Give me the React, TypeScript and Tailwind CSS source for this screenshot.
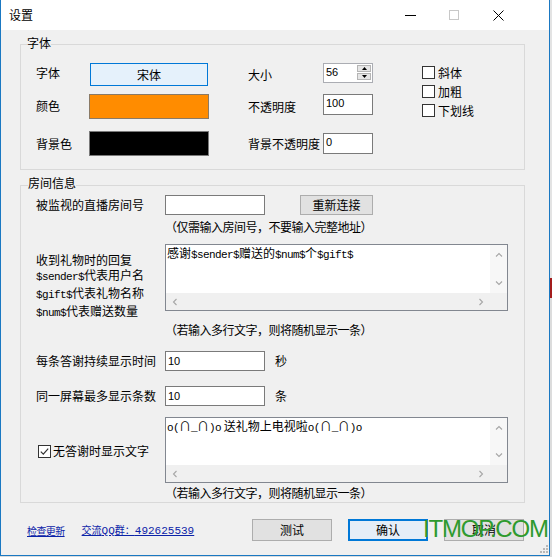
import React from "react";

const F = "font-['Noto_Sans_CJK_SC','Liberation_Sans',sans-serif]";

function M({ children }: { children: React.ReactNode }) {
  return <span className="font-['Liberation_Mono',monospace] text-[11px] tracking-[-0.6px]">{children}</span>;
}

function Chev({ d }: { d: "u" | "d" | "l" | "r" }) {
  const paths: Record<string, string> = {
    u: "M1 5.5 L4 2.5 L7 5.5",
    d: "M1 2.5 L4 5.5 L7 2.5",
    l: "M5.5 1 L2.5 4 L5.5 7",
    r: "M2.5 1 L5.5 4 L2.5 7",
  };
  return (
    <svg width="8" height="8" viewBox="0 0 8 8" className="shrink-0">
      <path d={paths[d]} stroke="#a6a6a6" strokeWidth="1.1" fill="none" />
    </svg>
  );
}

function Check({ checked }: { checked?: boolean }) {
  return (
    <span className="w-[13px] h-[13px] border border-[#333333] bg-white flex items-center justify-center shrink-0">
      {checked && (
        <svg width="11" height="11" viewBox="0 0 11 11">
          <path d="M1.8 5.6 L4.3 8.1 L9.2 2.6" stroke="#333333" strokeWidth="1.2" fill="none" />
        </svg>
      )}
    </span>
  );
}

function TA({ h, children }: { h: string; children: React.ReactNode }) {
  return (
    <div className={`w-[343px] ${h} border border-[#828790] bg-white flex flex-col shrink-0`}>
      <div className="flex-1 flex min-h-0">
        <div className="flex-1 pl-[1px] pt-0 leading-[15px] whitespace-nowrap">{children}</div>
        <div className="w-[17px] bg-[#f7f7f7] flex flex-col justify-between items-center py-[6px]">
          <Chev d="u" />
          <Chev d="d" />
        </div>
      </div>
      <div className="h-[17px] flex bg-[#f0f0f0] shrink-0">
        <div className="flex-1 flex items-center justify-between px-[5px]">
          <Chev d="l" />
          <Chev d="r" />
        </div>
        <div className="w-[17px]" />
      </div>
    </div>
  );
}

function NumInput({ v, w, h }: { v: string; w: string; h: string }) {
  return (
    <div className={`${w} ${h} border border-[#7a7a7a] bg-white pl-[2px] pt-[2px] font-['Liberation_Sans',sans-serif] text-[11px] leading-[13px] shrink-0`}>
      {v}
    </div>
  );
}

export default function App() {
  return (
    <div className={`w-[552px] h-[557px] flex bg-[#dcdcdc] overflow-hidden relative ${F} text-[12px] text-black`}>
      <div className="w-[550px] h-[556px] flex flex-col border-x border-b border-[#1a78c2] bg-[#f0f0f0] relative shrink-0">
        {/* title bar */}
        <div className="h-[30px] bg-white flex items-center shrink-0">
          <span className="ml-[8px] leading-[14px]">设置</span>
          <div className="ml-auto mr-[29px] flex items-center h-full">
            <div className="w-[44px] h-full flex items-center justify-center">
              <div className="w-[11px] h-[1px] bg-black" />
            </div>
            <div className="w-[44px] h-full flex items-center justify-center">
              <div className="w-[10px] h-[10px] border border-[#c8c8c8]" />
            </div>
            <div className="w-[44px] h-full flex items-center justify-center">
              <svg width="11" height="11" viewBox="0 0 11 11">
                <path d="M0.5 0.5 L10.5 10.5 M10.5 0.5 L0.5 10.5" stroke="#000" strokeWidth="1" />
              </svg>
            </div>
          </div>
        </div>

        {/* group 字体 */}
        <div className="relative ml-[19px] mt-[14px] w-[505px] h-[126px] border border-[#d9d9d9] shrink-0">
          <span className="absolute left-[6px] -top-[9px] bg-[#f0f0f0] leading-[14px]">字体</span>
          <div className="flex">
            <div className="flex flex-col pl-[15px] pt-[17px]">
              <div className="flex items-center h-[25px]">
                <span className="w-[53px] -mt-[4px]">字体</span>
                <div className="w-[120px] flex justify-center">
                  <div className="w-[118px] h-[23px] border border-[#0078d7] bg-[#e5f1fb] flex items-center justify-center">宋体</div>
                </div>
                <span className="ml-[39px] w-[75px]">大小</span>
                <div className="w-[50px] h-[20px] border border-[#abadb3] bg-white flex items-start -mt-[4px]">
                  <span className="flex-1 pl-[2px] pt-[2px] font-['Liberation_Sans',sans-serif] text-[11px] leading-[13px]">56</span>
                  <div className="w-[14px] mr-[1px] mt-[1px] flex flex-col gap-[1px]">
                    <div className="h-[7px] border border-[#b5b5b5] bg-[#e6e6e6] flex items-center justify-center">
                      <svg width="5" height="3" viewBox="0 0 5 3"><path d="M0 3 L2.5 0 L5 3 Z" fill="#000" /></svg>
                    </div>
                    <div className="h-[7px] border border-[#b5b5b5] bg-[#e6e6e6] flex items-center justify-center">
                      <svg width="5" height="3" viewBox="0 0 5 3"><path d="M0 0 L2.5 3 L5 0 Z" fill="#000" /></svg>
                    </div>
                  </div>
                </div>
              </div>
              <div className="flex items-center h-[25px] mt-[7px]">
                <span className="w-[53px] -mt-[2px]">颜色</span>
                <div className="w-[120px] h-[25px] border border-[#8a7a66] bg-[#ff8c00]" />
                <span className="ml-[39px] w-[75px]">不透明度</span>
                <div className="-mt-[4px]">
                  <NumInput v="100" w="w-[50px]" h="h-[21px]" />
                </div>
              </div>
              <div className="flex items-center h-[25px] mt-[12px]">
                <span className="w-[53px]">背景色</span>
                <div className="w-[120px] h-[25px] border border-[#7a7a7a] bg-black" />
                <span className="ml-[39px] w-[75px]">背景不透明度</span>
                <NumInput v="0" w="w-[50px]" h="h-[21px]" />
              </div>
            </div>
            <div className="ml-[49px] pt-[18px] flex flex-col">
              {["斜体", "加粗", "下划线"].map((t) => (
                <div key={t} className="flex items-center h-[19px]">
                  <Check />
                  <span className="ml-[3px] leading-[14px]">{t}</span>
                </div>
              ))}
            </div>
          </div>
        </div>

        {/* group 房间信息 */}
        <div className="relative ml-[19px] mt-[15px] w-[505px] h-[318px] border border-[#d9d9d9] shrink-0">
          <span className="absolute left-[7px] -top-[10px] bg-[#f0f0f0] leading-[14px]">房间信息</span>
          <div className="flex flex-col pl-[15px]">
            <div className="flex items-center h-[21px] mt-[8px]">
              <span className="w-[129px]">被监视的直播房间号</span>
              <div className="w-[100px] h-[20px] border border-[#7a7a7a] bg-white mt-[1px]" />
              <div className="ml-[35px] w-[73px] h-[20px] border border-[#adadad] bg-[#e1e1e1] flex items-center justify-center">重新连接</div>
            </div>
            <div className="ml-[129px] mt-[5px] leading-[14px] tracking-[-0.5px]">（仅需输入房间号，不要输入完整地址）</div>
            <div className="flex mt-[10px]">
              <div className="w-[129px] pt-[8px] leading-[15px] shrink-0">
                <div>收到礼物时的回复</div>
                <div><M>$sender$</M>代表用户名</div>
                <div><M>$gift$</M>代表礼物名称</div>
                <div><M>$num$</M>代表赠送数量</div>
              </div>
              <TA h="h-[67px]">
                感谢<M>$sender$</M>赠送的<M>$num$</M>个<M>$gift$</M>
              </TA>
            </div>
            <div className="ml-[129px] mt-[2px] leading-[14px] tracking-[-0.5px]">（若输入多行文字，则将随机显示一条）</div>
            <div className="flex items-center h-[20px] mt-[14px]">
              <span className="w-[129px]">每条答谢持续显示时间</span>
              <div className="w-[100px] h-[20px] border border-[#7a7a7a] bg-white pl-[2px] pt-[3px] font-['Liberation_Sans',sans-serif] text-[11px] leading-[13px]">10</div>
              <span className="ml-[10px]">秒</span>
            </div>
            <div className="flex items-center h-[20px] mt-[15px]">
              <span className="w-[129px]">同一屏幕最多显示条数</span>
              <div className="w-[100px] h-[20px] border border-[#7a7a7a] bg-white pl-[2px] pt-[3px] font-['Liberation_Sans',sans-serif] text-[11px] leading-[13px]">10</div>
              <span className="ml-[10px]">条</span>
            </div>
            <div className="flex items-center mt-[11px]">
              <div className="w-[129px] flex items-center pl-[2px] mt-[2px]">
                <Check checked />
                <span className="ml-[2px] leading-[14px]">无答谢时显示文字</span>
              </div>
              <TA h="h-[66px]">
                <M>o(</M>∩<M>_</M>∩<M>)o</M> 送礼物上电视啦<M>o(</M>∩<M>_</M>∩<M>)o</M>
              </TA>
            </div>
            <div className="ml-[129px] mt-[3px] leading-[14px] tracking-[-0.5px]">（若输入多行文字，则将随机显示一条）</div>
          </div>
        </div>

        {/* footer */}
        <div className="flex items-center h-[22px] mt-[16px] shrink-0">
          <div className="pl-[26px] flex items-center text-[10px] text-[#0b23a8] underline leading-[12px] mt-[1px]">
            <span className="tracking-[-0.6px]">检查更新</span>
            <span className="ml-[17px]">
              交流<span className="font-['Liberation_Mono',monospace] text-[11px]">QQ</span>群：<span className="font-['Liberation_Mono',monospace] text-[11px]">492625539</span>
            </span>
          </div>
          <div className="ml-auto mr-[25px] flex gap-[16px]">
            <div className="w-[80px] h-[22px] border border-[#adadad] bg-[#e1e1e1] flex items-center justify-center">测试</div>
            <div className="w-[80px] h-[22px] border-2 border-[#0078d7] bg-[#e5eef7] flex items-center justify-center">确认</div>
            <div className="w-[80px] h-[22px] border border-[#adadad] bg-[#e1e1e1] flex items-center justify-center">取消</div>
          </div>
        </div>

        {/* resize grip */}
        <svg className="absolute right-[1px] bottom-[1px]" width="10" height="10" viewBox="0 0 10 10">
          {[
            [8, 0], [8, 3], [5, 3], [8, 6], [5, 6], [2, 6],
          ].map(([x, y], i) => (
            <rect key={i} x={x} y={y + 1} width="2" height="2" fill="#b8b8b8" />
          ))}
        </svg>
      </div>

      {/* background strip behind window */}
      <div className="w-[2px] h-full flex flex-col shrink-0">
        <div className="h-[278px] bg-[#e3e3e3]" />
        <div className="h-[20px] bg-[#a31d1d]" />
        <div className="flex-1 bg-[#dcdcdc]" />
      </div>

      {/* watermark */}
      <div className="absolute left-[423px] top-[514px] font-['Liberation_Sans',sans-serif] text-[24px] tracking-[-1.2px] leading-[30px] text-[#2e9a2e]">
        ITMOP.COM
      </div>
    </div>
  );
}
